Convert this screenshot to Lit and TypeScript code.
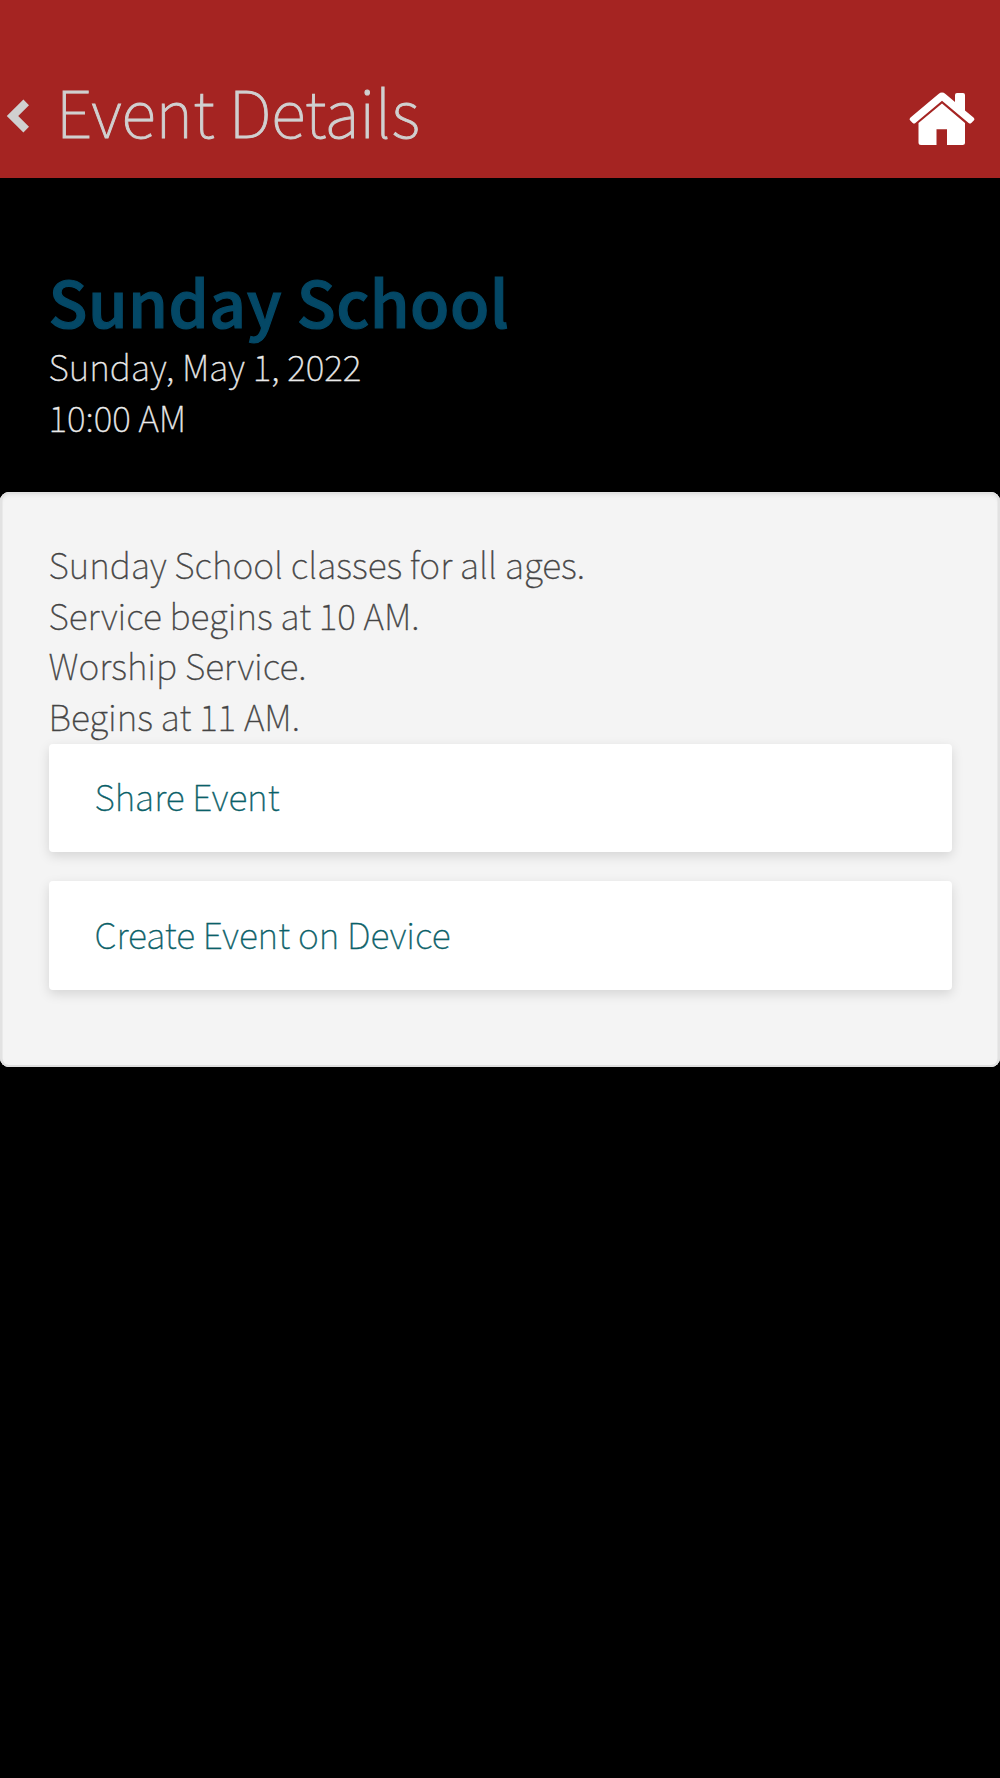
import { LitElement, html, css } from "lit";
import { customElement } from "lit/decorators.js";

@customElement("app-root")
export class AppRoot extends LitElement {
  static styles = css`
    :host {
      display: flex;
      flex-direction: column;
      box-sizing: border-box;
      height: 1778px;
      background: #000;
      font-family: "Noto Sans CJK JP", "Noto Sans", sans-serif;
      font-weight: 100;
      font-size: 35.5px;
      line-height: 50.7px;
      -webkit-text-stroke-width: 0.4px;
    }
    .bar {
      display: flex;
      align-items: center;
      box-sizing: border-box;
      height: 178px;
      padding: 58px 25px 0 6px;
      background: #a52422;
      color: #d0d0d0;
    }
    .back { display: block; width: 24px; height: 34px; margin-top: -4px; }
    .title {
      flex: 1;
      margin: -16px 0 0 26px;
      font-size: 64.5px;
      line-height: 80px;
      font-weight: 100;
      -webkit-text-stroke-width: 0.9px;
    }
    .home { display: block; width: 66px; height: 54px; margin-top: 2px; }
    .summary {
      box-sizing: border-box;
      height: 314px;
      padding: 85px 48.5px 0;
      color: #ebebeb;
    }
    .name {
      margin: 0 0 3px;
      font-size: 64px;
      line-height: 75px;
      font-weight: 500;
      -webkit-text-stroke-width: 1.2px;
      letter-spacing: 0.5px;
      color: #044866;
    }
    .line { margin: 0; white-space: nowrap; }
    .panel {
      box-sizing: border-box;
      height: 575px;
      padding: 47px 48.5px 0;
      border-radius: 9px;
      background: #f4f4f4;
      box-shadow: inset 2.5px 0 0 #e2e2e2, inset -2.5px 0 0 #e2e2e2,
        inset 0 -2px 0 #dedede, inset 0 2px 0 #e2e2e2,
        inset 0 3px 4px rgba(0, 0, 0, 0.07);
      color: #444;
    }
    .actions { display: flex; flex-direction: column; gap: 29px; margin-top: 2px; }
    .action {
      display: flex;
      align-items: center;
      box-sizing: border-box;
      height: 108.5px;
      padding: 0 46px 3px;
      border: 0;
      border-radius: 4px;
      background: #fff;
      box-shadow: 0 4px 12px rgba(0, 0, 0, 0.13);
      color: #0a6068;
      font: inherit;
    }
  `;

  render() {
    return html`
      <header class="bar">
        <svg class="back" viewBox="0 0 24 34">
          <path d="M17.4 0.5 23 6.2 12.2 17 23 27.8 17.4 33.5 0.8 17Z" fill="#d0d0d0" />
        </svg>
        <h1 class="title">Event Details</h1>
        <svg class="home" viewBox="0 0 66 54" fill="#fff">
          <path d="M29.5 2Q33 -0.8 36.5 2L46 10V3Q46 1 48 1H54Q56 1 56 3V18.5L64.5 25.5Q66 27 65 28.3L62.3 31Q61 32.2 59.6 31L33 8.7 6.4 31Q5 32.2 3.7 31L1 28.3Q0 27 1.5 25.5Z" />
          <path d="M33 11.5 56 31V50.5Q56 53 53.5 53H38V37.3H27.5V53H12Q9.5 53 9.5 50.5V31Z" />
        </svg>
      </header>
      <section class="summary">
        <h2 class="name">Sunday School</h2>
        <p class="line">Sunday, May 1, 2022</p>
        <p class="line">10:00 AM</p>
      </section>
      <section class="panel">
        <p class="line">Sunday School classes for all ages.</p>
        <p class="line">Service begins at 10 AM.</p>
        <p class="line">Worship Service.</p>
        <p class="line">Begins at 11 AM.</p>
        <div class="actions">
          <button class="action">Share Event</button>
          <button class="action">Create Event on Device</button>
        </div>
      </section>
    `;
  }
}
